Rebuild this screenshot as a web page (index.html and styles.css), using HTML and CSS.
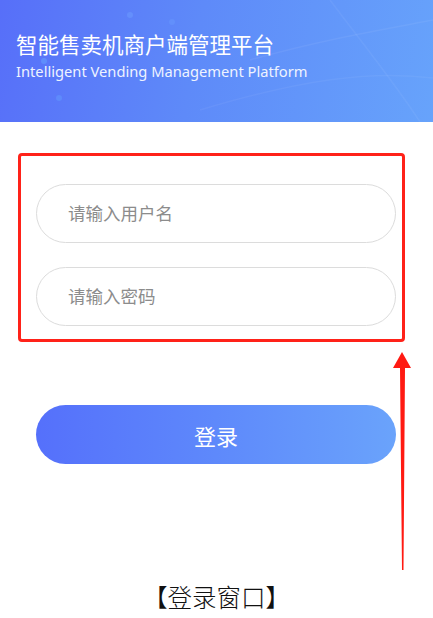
FILE: index.html
```html
<!DOCTYPE html>
<html lang="zh">
<head>
<meta charset="utf-8">
<title>登录窗口</title>
<link rel="stylesheet" href="styles.css">
</head>
<body>
<div class="page">
  <header class="hero">
    <svg class="hero-deco" width="433" height="122" viewBox="0 0 433 122" aria-hidden="true">
      <path d="M250 60 C320 40 380 30 433 20" stroke="rgba(255,255,255,0.06)" stroke-width="1.5" fill="none"/>
      <path d="M200 110 C300 80 370 70 433 78" stroke="rgba(255,255,255,0.05)" stroke-width="1.5" fill="none"/>
      <path d="M330 0 C360 40 400 90 420 122" stroke="rgba(255,255,255,0.05)" stroke-width="1.5" fill="none"/>
      <circle cx="130" cy="15" r="3" fill="rgba(110,160,255,0.45)"/>
      <circle cx="172" cy="22" r="3" fill="rgba(110,160,255,0.35)"/>
      <circle cx="44" cy="61" r="3" fill="rgba(100,160,255,0.55)"/>
      <circle cx="59" cy="98" r="3" fill="rgba(100,160,255,0.45)"/>
    </svg>
    <h1 class="hero-title">智能售卖机商户端管理平台</h1>
    <p class="hero-sub">Intelligent Vending Management Platform</p>
  </header>

  <main class="form">
    <div class="fields">
      <div class="field">请输入用户名</div>
      <div class="field">请输入密码</div>
    </div>
    <button class="login" type="button">登录</button>
  </main>

  <svg class="arrow" width="30" height="230" viewBox="0 0 30 230" aria-hidden="true">
    <polygon points="17,0 26,16 20,16 18.5,218 17,218 15,16 8,16" fill="#ff1a12"/>
  </svg>

  <p class="caption">【登录窗口】</p>
</div>
</body>
</html>
```
FILE: styles.css
```css
* { box-sizing: border-box; }
html, body { margin: 0; padding: 0; background: #fff; }
body { width: 433px; height: 618px; overflow: hidden; font-family: "Noto Sans", "Noto Sans CJK SC", sans-serif; }
.page { position: relative; width: 433px; height: 618px; }

.hero {
  position: relative;
  height: 122px;
  padding: 29px 0 0 16px;
  background: linear-gradient(100deg, #576ff9 0%, #5e8af9 45%, #67a3fb 100%);
  color: #fff;
  overflow: hidden;
}
.hero-deco { position: absolute; left: 0; top: 0; }
.hero-title {
  position: relative;
  margin: 0;
  font-family: "Noto Sans CJK SC", sans-serif;
  font-weight: 400;
  font-size: 21.5px;
  line-height: 30px;
}
.hero-sub {
  position: relative;
  margin: 3px 0 0;
  font-family: "Noto Sans", sans-serif;
  font-size: 14.7px;
  line-height: 19px;
  color: #eef3ff;
}

.form { padding: 31px 0 0 18px; }
.fields {
  width: 387px;
  height: 189px;
  border: 3px solid #ff2219;
  border-radius: 4px;
  padding: 28px 0 0 15px;
  display: flex;
  flex-direction: column;
  gap: 24px;
}
.field {
  width: 360px;
  height: 59px;
  border: 1px solid #dcdcdc;
  border-radius: 30px;
  padding-left: 31px;
  padding-bottom: 2px;
  display: flex;
  align-items: center;
  font-family: "Noto Sans CJK SC", sans-serif;
  font-size: 17.5px;
  color: #8c8c8c;
}
.login {
  display: block;
  margin: 63px 0 0 18px;
  width: 360px;
  height: 59px;
  border: 0;
  border-radius: 30px;
  background: linear-gradient(90deg, #5570fb 0%, #5e89fb 50%, #6aa3fb 100%);
  color: #fff;
  font-family: "Noto Sans CJK SC", sans-serif;
  font-size: 22px;
  padding: 0;
}

.arrow { position: absolute; left: 385px; top: 352px; }

.caption {
  position: absolute;
  left: 0; right: 0; top: 584px;
  margin: 0;
  text-align: center;
  font-family: "Liberation Serif", "Noto Sans CJK SC", serif;
  font-size: 24.5px;
  line-height: 30px;
  color: #111;
  font-weight: 300;
}
```
